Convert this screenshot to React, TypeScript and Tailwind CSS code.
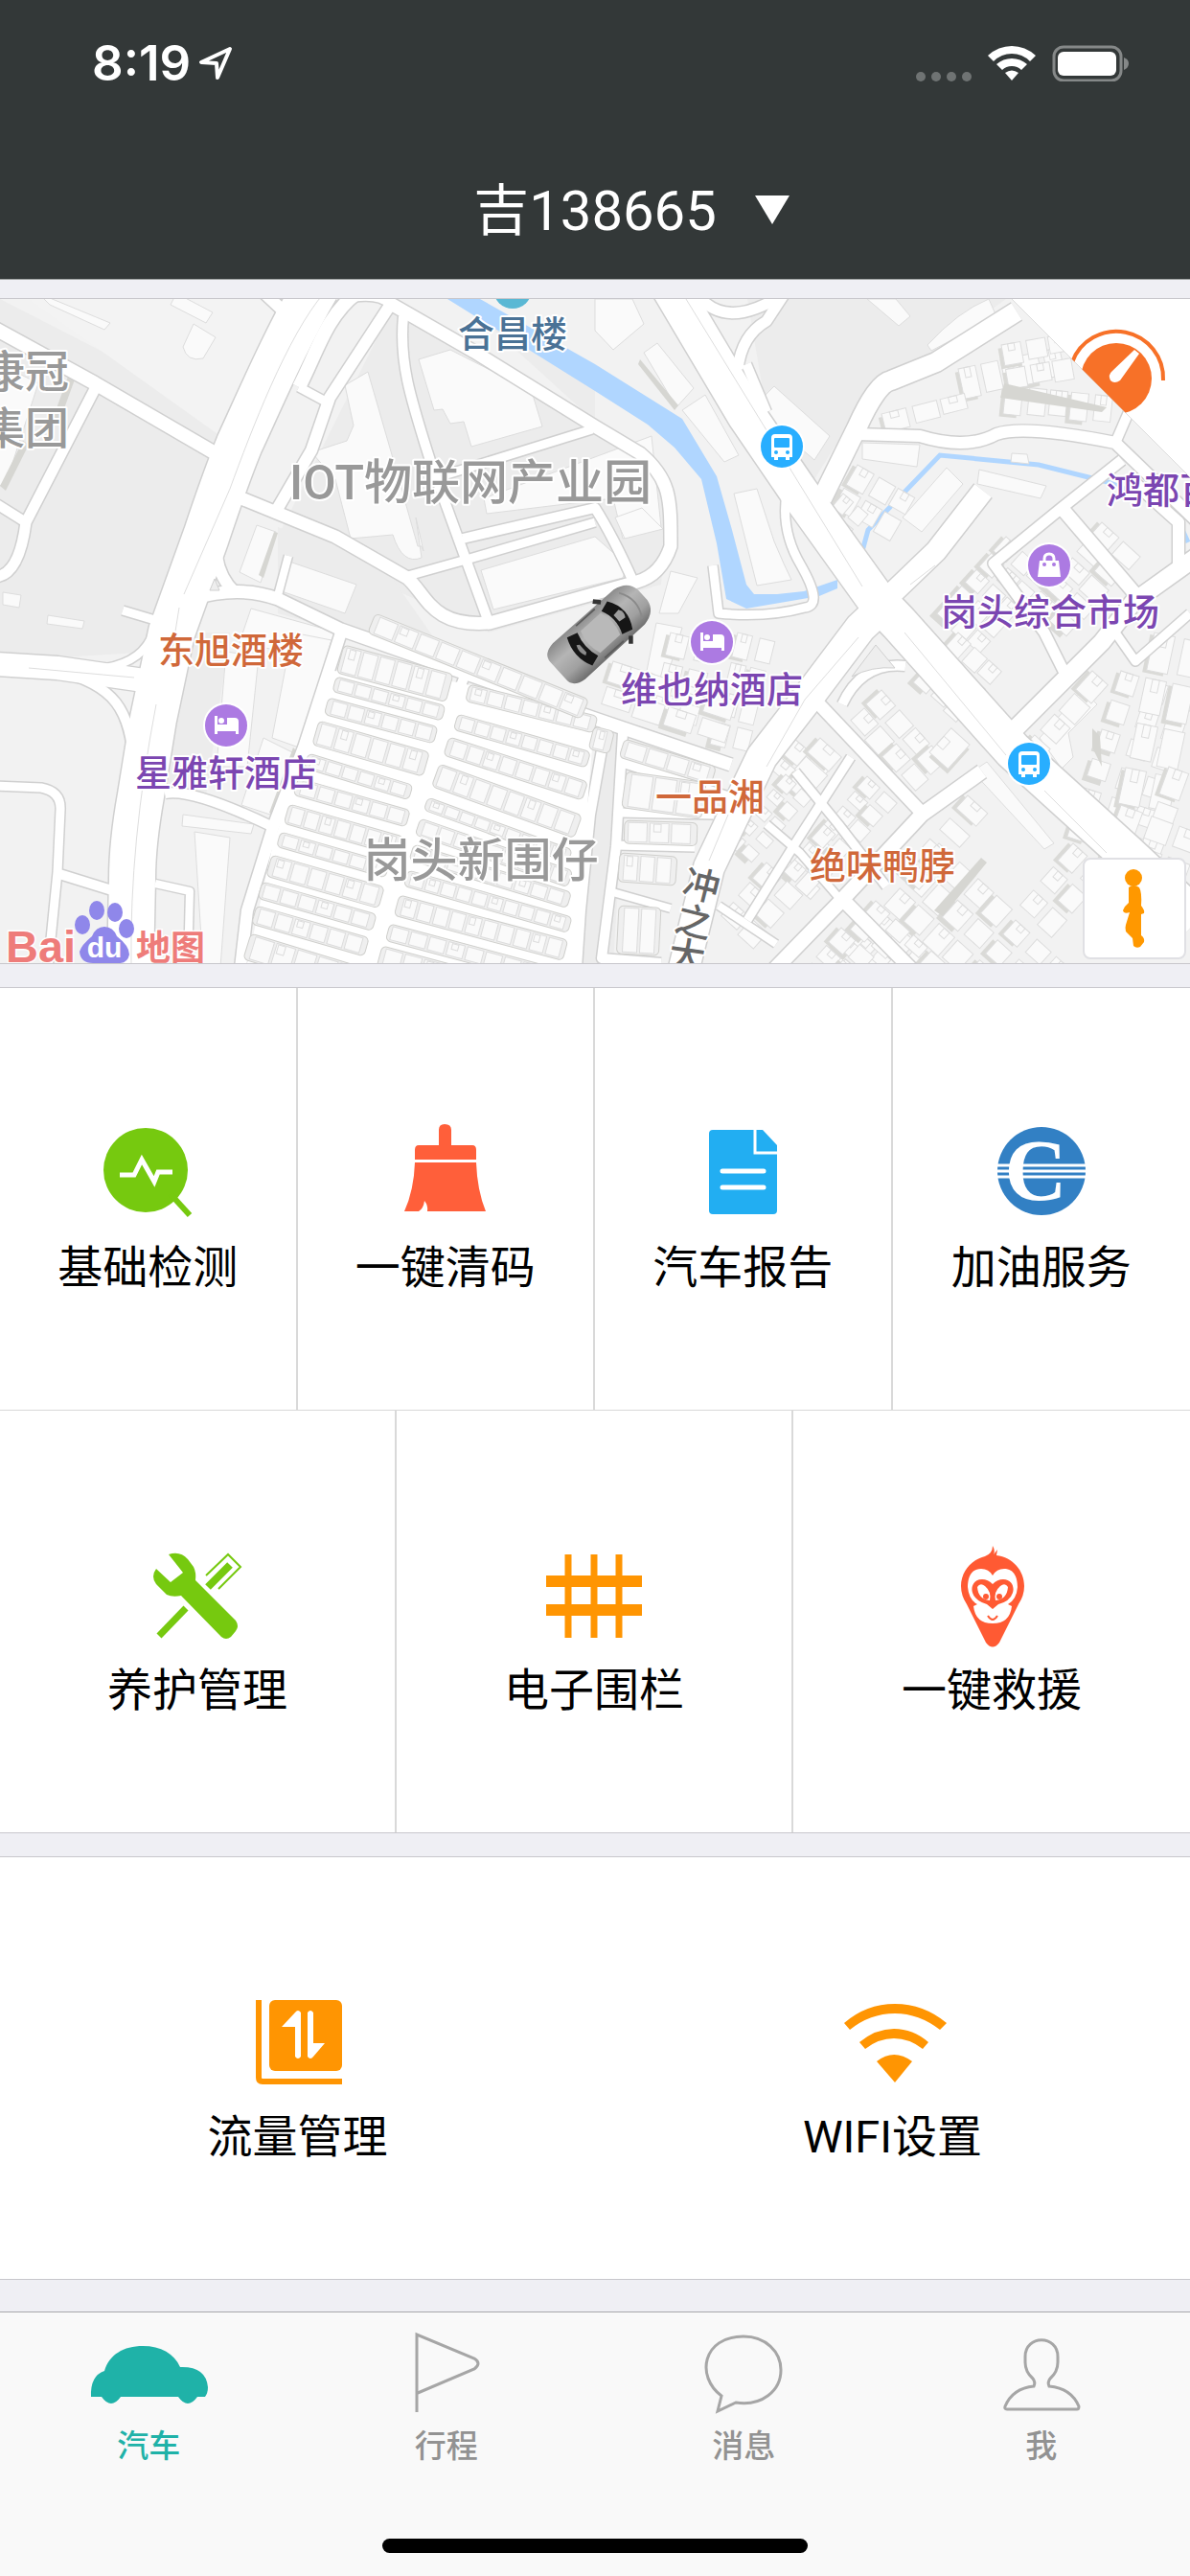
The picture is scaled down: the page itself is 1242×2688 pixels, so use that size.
import React from 'react';

const roads = [
  { d: 'M330 300 C300 350 270 420 250 463 C235 500 225 530 215 560 L179 660 L160 750 L147 830 Q138 880 138 917 L136 1010', w: 48 },
  { d: 'M276 306 L306 334', w: 12 },
  { d: 'M372 306 C340 330 330 370 312 404', w: 14 },
  { d: 'M-5 343 L99 400 L228 475', w: 14 },
  { d: 'M101 402 L27 545 Q20 600 -5 602', w: 11 },
  { d: 'M-5 525 L27 545', w: 10 },
  { d: 'M-5 693 L60 697 L150 710', w: 24 },
  { d: 'M60 700 C120 715 136 740 140 800', w: 10 },
  { d: 'M110 697 Q150 690 160 660', w: 8 },
  { d: 'M-5 820 L43 822 Q64 826 63 845 L60 910 L50 1010', w: 9 },
  { d: 'M62 912 L120 930', w: 10 },
  { d: 'M128 637 L165 648', w: 9 },
  { d: 'M408 317 L344 415 L325 470 L290 530', w: 12 },
  { d: 'M312 404 L338 418', w: 9 },
  { d: 'M370 308 Q400 305 408 317 L495 367 L621 445 L668 473 C700 500 700 520 700 570 Q690 600 665 607 L511 650 C450 655 445 620 425 603 L350 560 L252 520', w: 13 },
  { d: 'M421 330 C416 380 430 420 451 487 L511 652', w: 10 },
  { d: 'M618 448 L460 497', w: 9 },
  { d: 'M483 562 L621 530 Q640 560 661 607', w: 10 },
  { d: 'M422 602 L490 583 L621 545', w: 9 },
  { d: 'M200 625 Q250 610 290 625 L356 657 L621 750 L763 798', w: 13 },
  { d: 'M230 530 Q215 590 245 618', w: 12 },
  { d: 'M289 625 L301 580', w: 8 },
  { d: 'M356 660 L317 780 L285 863 L258 950 L251 1010', w: 12 },
  { d: 'M485 705 L440 823 L408 930 L388 1010', w: 10 },
  { d: 'M632 760 L616 850 L606 950 L602 1010', w: 10 },
  { d: 'M172 828 Q200 822 285 863', w: 10 },
  { d: 'M162 922 L198 930 L196 1010', w: 8 },
  { d: 'M930 625 L898 655 L843 728 L795 790 L771 840 L740 905 L714 1010', w: 32 },
  { d: 'M925 625 L977 575 L1026 512', w: 22 },
  { d: 'M700 300 L779 433 L835 515 L914 625 L938 650 L1057 783 L1175 890 L1250 960', w: 40 },
  { d: 'M823 505 Q812 550 836 590 Q860 632 840 634 Q800 645 750 640 L744 590', w: 9 },
  { d: 'M770 385 Q774 350 800 335 L819 306 Q760 345 730 310', w: 11 },
  { d: 'M779 380 L800 430', w: 10 },
  { d: 'M1061 325 L977 378 L930 397 Q915 400 894 447 L858 520', w: 20 },
  { d: 'M894 453 L960 455 Q1009 470 1040 453 Q1069 443 1164 462 L1250 545', w: 12 },
  { d: 'M1178 430 L1165 460', w: 10 },
  { d: 'M1171 480 L1108 530 L1037 588 L1090 660 L1110 700', w: 11 },
  { d: 'M1108 530 L1185 620', w: 14 },
  { d: 'M1180 500 L1230 545 L1230 590', w: 12 },
  { d: 'M1250 580 L1183 628 L1150 670 L1055 765', w: 18 },
  { d: 'M1025 805 L962 850 L875 943 L805 1015', w: 15 },
  { d: 'M1164 660 L1185 690 L1242 640', w: 9 },
  { d: 'M855 735 L962 848', w: 13 },
  { d: 'M879 735 Q900 690 945 695', w: 10 },
  { d: 'M879 938 L955 1015', w: 14 },
  { d: 'M888 790 L830 880 L780 960', w: 9 },
  { d: 'M800 860 L835 890 L874 935', w: 8 },
  { d: 'M830 805 L875 860 L925 925', w: 9 },
  { d: 'M750 945 L810 985', w: 8 },
  { d: 'M650 765 L643 883 L628 1000 L690 1005', w: 10 },
  { d: 'M648 795 L762 832', w: 10 },
  { d: 'M648 848 L745 850', w: 9 },
  { d: 'M643 882 L725 884', w: 9 },
  { d: 'M636 930 L700 948', w: 8 },
];

// rows of houses: x, y, length, height, angle, count
const terraces = [
  [359, 673, 118, 30, 15, 6], [351, 706, 118, 16, 15, 6], [343, 728, 118, 18, 15, 6], [333, 752, 120, 26, 16, 6],
  [322, 786, 114, 16, 17, 6], [311, 812, 122, 18, 16, 6], [302, 839, 124, 21, 16, 7], [293, 868, 118, 16, 16, 6],
  [284, 892, 122, 23, 16, 6], [274, 920, 124, 18, 16, 6], [268, 945, 122, 20, 16, 6], [262, 974, 124, 28, 17, 5],
  [490, 714, 138, 18, 14, 7], [478, 745, 144, 17, 16, 8], [469, 769, 152, 20, 18, 8], [459, 797, 158, 25, 20, 8],
  [447, 832, 160, 14, 20, 9], [439, 854, 168, 18, 19, 9], [432, 881, 172, 17, 17, 9], [426, 908, 178, 17, 16, 10],
  [417, 934, 182, 22, 15, 10], [407, 964, 190, 18, 15, 9], [399, 987, 196, 24, 15, 9], [392, 640, 240, 22, 22, 10],
  [620, 758, 22, 24, 14, 1], [652, 771, 100, 20, 17, 4], [654, 805, 84, 38, 8, 3], [652, 856, 76, 24, 2, 3],
  [647, 890, 60, 30, 4, 3], [646, 945, 44, 50, 3, 2],
];

// blocks of houses: x, y, angle, columns, rows, width, height, gap
const blocks = [
  [828, 770, 40, 2, 2, 22, 20, 4], [820, 808, 42, 2, 5, 15, 15, 5], [905, 810, 42, 2, 7, 18, 16, 4], [856, 770, 42, 1, 2, 30, 20, 4],
  [800, 900, 42, 2, 3, 22, 22, 5], [860, 860, 42, 2, 3, 16, 20, 4], [980, 880, 42, 4, 6, 22, 26, 5], [914, 940, 42, 6, 3, 20, 18, 6],
  [1010, 830, 42, 1, 4, 28, 18, 12], [878, 968, 42, 2, 3, 20, 20, 4], [920, 720, 48, 4, 2, 22, 22, 4], [970, 785, -48, 1, 1, 34, 26, 4],
  [1170, 700, 18, 3, 6, 20, 22, 10], [1120, 880, 42, 2, 3, 20, 24, 8], [1060, 960, 42, 3, 3, 20, 20, 8], [1205, 660, 12, 2, 4, 22, 40, 8],
  [1050, 560, 42, 3, 5, 18, 20, 3], [1150, 545, 42, 2, 5, 24, 20, 4], [1140, 700, 42, 1, 4, 22, 26, 4], [1000, 660, 42, 3, 3, 18, 22, 3],
  [1050, 402, 6, 5, 1, 18, 30, 5], [1000, 385, -12, 5, 1, 18, 32, 4], [1045, 360, -10, 3, 2, 20, 22, 4], [920, 432, -14, 3, 1, 26, 20, 5],
  [895, 485, 30, 3, 2, 20, 24, 4], [880, 515, 40, 2, 2, 14, 18, 4], [700, 660, 14, 2, 3, 20, 24, 8], [770, 660, 14, 2, 4, 16, 26, 6],
  [640, 690, 18, 4, 2, 30, 22, 5], [1220, 800, 20, 1, 3, 22, 30, 8], [1170, 840, 20, 3, 3, 24, 26, 8],
];

const buildings = [
  'M40 306 L115 337 L109 344 L52 318 Z', 'M184 306 L222 326 L215 337 L178 318 Z', 'M202 338 L225 352 L212 374 Q195 378 191 362 Z',
  'M3 618 L22 621 L20 634 L3 631 Z', 'M50 642 L88 648 L86 656 L49 651 Z', 'M0 380 L40 400 L5 508 L-5 505 Z',
  'M360 402 L384 388 L410 478 L436 570 L440 570 L442 575 L434 540 L440 582 Q420 590 410 558 L366 562 L350 500 L325 472 L362 460 L369 444 Z',
  'M437 375 L470 365 L535 398 L556 412 L566 445 L492 466 L484 440 L470 442 L462 427 L453 428 Z',
  'M505 520 L680 455 L690 550 L650 562 L640 520 L508 536 Z', 'M502 595 L621 560 L655 590 L650 603 L515 636 Z',
  'M268 548 L288 555 L272 608 L250 597 Z', 'M302 586 L372 610 L360 640 L294 617 Z', 'M262 635 L360 662 L340 690 L250 670 Z',
  'M236 680 L270 685 L258 800 L226 800 Z', 'M305 660 L346 668 L312 780 L284 770 Z', 'M275 770 L305 785 L282 850 L252 840 Z',
  'M203 868 L240 874 L230 1010 L212 1010 Z', 'M191 850 L265 860 L262 870 L190 862 Z',
  'M621 312 L660 312 L672 338 L640 365 L621 345 Z', 'M672 368 L686 358 L724 405 L706 425 Z', 'M712 428 L736 412 L771 475 L756 482 Z',
  'M766 515 L790 510 L808 565 L818 588 L826 605 L790 611 Z', 'M642 540 L670 530 L692 552 L652 562 Z', 'M700 596 L728 603 L708 640 L688 640 Z',
  'M786 425 L808 403 L866 455 L850 480 Z', 'M900 462 L960 464 L957 487 L900 479 Z', 'M942 540 L988 488 L1005 505 L962 555 Z',
  'M1022 490 L1092 507 L1086 520 L1020 505 Z', 'M968 360 Q1000 325 1032 312 L1040 330 L972 366 Z', 'M905 312 L935 312 L950 330 L938 340 Z',
  'M1055 482 L1074 484 L1072 474 L1056 473 Z', 'M1030 795 L1100 880 L1090 886 L1015 805 Z', 'M1085 770 L1130 720 L1145 735 L1115 765 L1120 790 L1108 802 Z',
  'M685 650 L712 655 L695 710 L675 700 Z',
];

const shades = [
  'M72 390 L54 440 L62 440 L78 396 Z', 'M0 507 L24 460 L30 464 L6 512 Z', 'M286 555 L290 556 L275 603 L270 600 Z',
  'M668 375 L708 423 L704 428 L666 380 Z', 'M306 780 L310 784 L286 850 L281 848 Z', 'M1118 530 L1170 600 L1166 606 L1114 536 Z',
  'M1140 760 L1148 768 L1150 800 L1140 780 Z', 'M975 950 L1024 895 L1030 900 L984 956 Z', 'M1048 400 L1044 415 L1150 430 L1155 425 Z',
];

const centreLines = 'M338 306 C300 350 262 450 240 510 L192 620 M187 634 L178 690 M163 735 Q135 880 137 1005 M716 312 L900 612 M950 610 L976 590 M896 665 L840 730 L800 800 M760 850 L740 898 M944 660 L1050 788 M1090 825 L1155 890 M30 697 L140 707';

const labels = [
  { text: '康冠', x: 26, y: 404, size: 46, fill: '#999999' },
  { text: '集团', x: 26, y: 463, size: 46, fill: '#999999' },
  { text: 'IOT物联网产业园', x: 491, y: 521, size: 50, fill: '#999999' },
  { text: '岗头新围仔', x: 502, y: 915, size: 49, fill: '#999999' },
  { text: '合昌楼', x: 535, y: 362, size: 38, fill: '#4a7296' },
  { text: '鸿都百', x: 1212, y: 525, size: 38, fill: '#7b46b1' },
  { text: '岗头综合市场', x: 1096, y: 652, size: 38, fill: '#7b46b1' },
  { text: '维也纳酒店', x: 743, y: 733, size: 38, fill: '#7b46b1' },
  { text: '星雅轩酒店', x: 236, y: 820, size: 38, fill: '#7b46b1' },
  { text: '东旭酒楼', x: 241, y: 692, size: 38, fill: '#d0683a' },
  { text: '一品湘', x: 741, y: 845, size: 38, fill: '#d0683a' },
  { text: '绝味鸭脖', x: 921, y: 917, size: 38, fill: '#d0683a' },
];

const BusPin = ({ x, y }: { x: number; y: number }) => (
  <g transform={`translate(${x} ${y})`}>
    <circle r="24" fill="#ffffff" />
    <circle r="22" fill="#28aeff" />
    <path d="M-11 -9 Q-11 -13 -7 -13 H7 Q11 -13 11 -9 V11 H8 V14 H4 V11 H-4 V14 H-8 V11 H-11 Z" fill="#ffffff" />
    <rect x="-8" y="-9" width="16" height="10" rx="1" fill="#28aeff" />
    <circle cx="-6" cy="6" r="2" fill="#28aeff" />
    <circle cx="6" cy="6" r="2" fill="#28aeff" />
  </g>
);

const HotelPin = ({ x, y }: { x: number; y: number }) => (
  <g transform={`translate(${x} ${y})`}>
    <circle r="24" fill="#ffffff" />
    <circle r="22" fill="#ac7ae2" />
    <path d="M-12 -10 H-9 V-1 H1 V-8 H9 Q13 -8 13 -4 V9 H10 V6 H-9 V9 H-12 Z" fill="#ffffff" />
    <circle cx="-5" cy="-5" r="3" fill="#ffffff" />
  </g>
);

const MapView = () => (
  <svg viewBox="0 312 1242 693" preserveAspectRatio="xMidYMid slice" className="block h-full w-full">
    <defs>
      <linearGradient id="carBody" x1="0" y1="0" x2="0" y2="1">
        <stop offset="0" stopColor="#8a8a8a" />
        <stop offset="0.35" stopColor="#b5b5b5" />
        <stop offset="0.7" stopColor="#a0a0a0" />
        <stop offset="1" stopColor="#6e6e6e" />
      </linearGradient>
    </defs>
    <rect y="312" width="1242" height="693" fill="#f2f2f2" />
    <g fill="#ececec">
      <path d="M0 312 L230 430 L228 490 L160 680 L0 690 Z" />
      <path d="M410 320 L621 440 L700 500 L690 610 L510 660 L290 560 Z" />
      <path d="M290 550 L400 590 L470 690 L290 640 Z M780 312 H1050 L900 420 L850 500 L800 430 Z" />
      <path d="M625 760 L655 770 L640 1005 H605 Z M480 312 L621 440 V380 Z M170 660 L240 660 L215 830 L165 820 Z" />
    </g>
    <path d="M30 312 L310 312 L230 455 Z" fill="#f3f3f3" />
    <path d="M467 312 H501 L621 380 L712 437 L748 497 L764 553 L779 610 L787 620 H811 L839 617 L874 605 V614 L855 622 L779 635 L758 625 L748 567 L732 500 L704 467 L676 443 L621 408 Z" fill="#b0d6ff" />
    <path d="M900 575 L906 553 L981 475 L1084 485 L1156 503 L1191 517 L1227 537 L1240 566" fill="none" stroke="#b0d6ff" strokeWidth="5" />
    <g fill="#fafafa" stroke="#dddddd" strokeWidth="1">
      {buildings.map((d, index) => (
        <path key={index} d={d} />
      ))}
      {blocks.map(([x, y, angle, cols, rows, w, h, gap], index) => (
        <g key={index} transform={`translate(${x} ${y}) rotate(${angle})`}>
          {Array.from({ length: cols * rows }, (_, i) => {
            const left = (i % cols) * (w + gap) + ((i * 5) % 3);
            const top = Math.floor(i / cols) * (h + gap);
            return (
              <g key={i}>
                {i % 3 === 0 && <rect x={left - 4} y={top + 3} width={w} height={h} fill="#dadad7" stroke="none" />}
                <rect x={left} y={top} width={w} height={h - ((i * 7) % 5)} />
                {i % 2 === 0 && <rect x={left + w / 3} y={top} width={w / 3} height={h / 3} fill="none" />}
              </g>
            );
          })}
        </g>
      ))}
    </g>
    <g fill="#d6d6d2">
      {shades.map((d, index) => (
        <path key={index} d={d} />
      ))}
    </g>
    <g fill="none" stroke="#d0d0d0" strokeLinejoin="round">
      {roads.map((road, index) => (
        <path key={index} d={road.d} strokeWidth={road.w + 3} />
      ))}
    </g>
    <g fill="none" stroke="#ffffff" strokeLinejoin="round">
      {roads.map((road, index) => (
        <path key={index} d={road.d} strokeWidth={road.w} />
      ))}
    </g>
    <path d={centreLines} fill="none" stroke="#dedede" strokeWidth="1" />
    <path d="M348 700 L480 712 L620 755 L600 1005 H258 L285 880 Z" fill="#ffffff" />
    <path d="M914 673 L889 706 Q910 695 934 697 Z M224 604 L219 616 L229 616 Z" fill="#eeeeee" stroke="#d0d0d0" />
    {terraces.map(([x, y, length, height, angle, count], index) => (
      <g key={index} transform={`translate(${x} ${y}) rotate(${angle})`}>
        <rect width={length} height={height} rx="5" fill="#efefef" stroke="#cfcfcc" strokeWidth="1" />
        {Array.from({ length: count }, (_, i) => {
          const pitch = (length - 8) / count;
          return (
            <g key={i} fill="#fafafa" stroke="#dcdcdc">
              <rect x={4 + i * pitch + ((i * 3 + index) % 3)} y="2" width={pitch - 3} height={height - 4} />
              {(i + index) % 4 === 0 && <rect x={8 + i * pitch} y="3" width={pitch / 3} height={height / 3} />}
            </g>
          );
        })}
      </g>
    ))}

    <circle cx="535" cy="302" r="20" fill="#5ab8d4" />
    <BusPin x={816} y={466} />
    <BusPin x={1074} y={797} />
    <HotelPin x={743} y={670} />
    <HotelPin x={236} y={757} />
    <g transform="translate(1095 590)">
      <circle r="24" fill="#ffffff" />
      <circle r="22" fill="#ac7ae2" />
      <path d="M-10 -5 H10 L12 12 H-12 Z" fill="#ffffff" />
      <path d="M-5 -5 V-7 Q-5 -12 0 -12 Q5 -12 5 -7 V-5" fill="none" stroke="#ffffff" strokeWidth="3" />
      <circle cx="-5" cy="-1" r="2" fill="#ac7ae2" />
      <circle cx="5" cy="-1" r="2" fill="#ac7ae2" />
    </g>

    <g textAnchor="middle" stroke="#ffffff" strokeWidth="4" strokeLinejoin="round" paintOrder="stroke" className="font-medium">
      {labels.map((label) => (
        <text key={label.text} x={label.x} y={label.y} fontSize={label.size} fill={label.fill}>
          {label.text}
        </text>
      ))}
      <g fontSize="38" fill="#666666">
        <text transform="translate(729 937) rotate(14)">冲</text>
        <text transform="translate(721 975) rotate(14)">之</text>
        <text transform="translate(715 1011) rotate(8)">大</text>
      </g>
    </g>

    {/* car marker */}
    <g transform="translate(626 661) rotate(-42) scale(0.94 0.9)">
      <path d="M-62 -14 Q-62 -26 -46 -28 L44 -27 Q62 -24 64 -8 V8 Q62 24 44 27 L-46 28 Q-62 26 -62 14 Z" fill="url(#carBody)" />
      <path d="M18 -33 L24 -26 M18 33 L24 26" stroke="#333333" strokeWidth="5" />
      <path d="M30 -22 Q44 0 30 22 L18 18 Q26 0 18 -18 Z" fill="#161616" />
      <path d="M33 -6 Q37 0 33 6 L25 5 V-5 Z" fill="#9c9c9c" />
      <path d="M-30 -22 Q-40 0 -30 22 L-18 18 Q-24 0 -18 -18 Z" fill="#161616" />
      <path d="M-28 -8 Q-32 0 -28 8 L-25 6 V-6 Z" fill="#8c8c8c" />
      <path d="M-14 -25 H14 M-14 25 H14" stroke="#5c5c5c" strokeWidth="2" />
      <path d="M-14 -17 Q-20 0 -14 17 L16 17 Q22 0 16 -17 Z" fill="#b9b9b9" />
      <path d="M46 -20 Q58 0 46 20" fill="none" stroke="#8a8a8a" strokeWidth="2" />
    </g>

    {/* map provider logo */}
    <g stroke="#ffffff" strokeWidth="3" paintOrder="stroke" className="font-bold">
      <text x="6" y="1004" fontSize="47" fill="#ee7c7a" fontFamily="Liberation Sans, Arial, sans-serif">Bai</text>
      <text x="142" y="1002" fontSize="36" fill="#ee7c7a">地图</text>
    </g>
    <g fill="#8f87ea">
      <ellipse cx="86" cy="965" rx="8" ry="10" />
      <ellipse cx="101" cy="950" rx="8" ry="10" />
      <ellipse cx="120" cy="952" rx="8" ry="10" />
      <ellipse cx="132" cy="969" rx="8" ry="10" />
      <path d="M109 967 Q118 967 122 977 Q135 987 135 996 Q133 1006 122 1005 H97 Q84 1005 83 993 Q85 986 96 977 Q100 967 109 967 Z" />
    </g>
    <text x="109" y="999" fontSize="30" textAnchor="middle" fill="#ffffff" fontFamily="Liberation Sans, Arial, sans-serif" className="font-bold">du</text>
  </svg>
);

const DetectIcon = () => (
  <svg viewBox="0 0 120 120" className="size-[120px]">
    <circle cx="58" cy="59" r="44" fill="#76c90f" />
    <path d="M84 84 L104 106" stroke="#76c90f" strokeWidth="6" />
    <path d="M31 64 H46 L54 48 L67 71 L71 61 H86" fill="none" stroke="#ffffff" strokeWidth="5" />
  </svg>
);

const BroomIcon = () => (
  <svg viewBox="0 0 120 120" className="size-[120px]" fill="#ff5f3a">
    <path d="M53 17 Q53 11 59 11 Q66 11 66 17 V33 H88 Q92 33 92 38 V48 H28 V38 Q28 33 32 33 H53 Z" />
    <path d="M28 51 H92 Q93 80 102 102 H41 Q42 96 38 91 Q37 99 32 102 H17 Q27 80 28 51 Z" />
  </svg>
);

const ReportIcon = () => (
  <svg viewBox="0 0 120 120" className="size-[120px]">
    <path d="M29 17 H81 L96 33 V101 Q96 105 92 105 H29 Q25 105 25 101 V21 Q25 17 29 17 Z" fill="#22aef2" />
    <path d="M73 17 V41 H96" fill="none" stroke="#ffffff" strokeWidth="3" />
    <path d="M39 60 H82 M39 77 H82" stroke="#ffffff" strokeWidth="5" strokeLinecap="round" />
  </svg>
);

const FuelIcon = () => (
  <svg viewBox="0 0 120 120" className="size-[120px]">
    <circle cx="60" cy="60" r="46" fill="#3280c4" />
    <path d="M14 54 H106 M14 60 H106 M14 66 H106" stroke="#ffffff" strokeWidth="3" />
    <text x="54" y="90" fontSize="90" textAnchor="middle" fill="#ffffff" fontFamily="Liberation Serif, serif" className="font-bold">C</text>
  </svg>
);

const ToolsIcon = () => (
  <svg viewBox="0 0 120 120" className="size-[120px]">
    <path d="M30 19 Q42 15 50 24 L56 32 Q59 38 58 46 L100 88 Q104 94 100 99 L95 105 Q90 109 85 105 L43 62 Q34 64 28 61 L17 50 Q11 42 17 34 L32 48 L45 38 Z" fill="#76c90f" />
    <path d="M20 104 L48 75" stroke="#76c90f" strokeWidth="7" />
    <path d="M71 53 L94 30" stroke="#76c90f" strokeWidth="8" />
    <path d="M69 41 L92 19 L105 32 L82 55" fill="none" stroke="#76c90f" strokeWidth="2" />
  </svg>
);

const FenceIcon = () => (
  <svg viewBox="0 0 120 120" className="size-[120px]" stroke="#ff9502">
    <path d="M33 19 V106 M60 19 V106 M86 19 V106" strokeWidth="7" />
    <path d="M10 47 H110 M10 77 H110" strokeWidth="12" />
  </svg>
);

const RescueIcon = () => (
  <svg viewBox="0 0 120 120" className="size-[120px]">
    <path d="M53 21 Q61 18 61 10 Q64 15 62 19 L66 14 L65 20 C82 22 94 36 94 52 Q94 62 88 71 L68 111 Q61 120 54 111 L34 71 Q28 62 28 52 C28 36 40 24 53 21 Z" fill="#ff5a33" />
    <path d="M61 41 Q57 34 49 34 C38 34 35 44 35 53 Q36 66 45 71 L41 73 Q43 91 61 91 Q79 91 81 73 L77 71 Q86 66 87 53 C87 44 84 34 73 34 Q65 34 61 41 Z" fill="#ffffff" />
    <path d="M61 50 Q56 45 50 45 C41 45 38 53 40 59 Q43 68 55 71 L61 76 L67 71 Q79 68 82 59 C84 53 81 45 72 45 Q66 45 61 50 Z" fill="#ff5a33" />
    <path d="M45 53 Q48 48 53 52 Q60 58 58 67 Q46 66 45 53 Z M77 53 Q74 48 69 52 Q62 58 64 67 Q76 66 77 53 Z" fill="#ffffff" />
    <circle cx="54" cy="63" r="3" fill="#ff5a33" />
    <circle cx="68" cy="63" r="3" fill="#ff5a33" />
    <path d="M56 83 Q61 91 66 83" fill="none" stroke="#ff5a33" strokeWidth="2" />
  </svg>
);

const TrafficIcon = () => (
  <svg viewBox="0 0 120 120" className="size-[120px]">
    <rect x="30" y="18" width="76" height="74" rx="6" fill="#ff9502" />
    <path d="M19 18 V99 Q19 103 23 103 H106" fill="none" stroke="#ff9502" strokeWidth="6" />
    <path d="M57 31 Q60 27 63 31 V77 Q60 81 57 77 V46 H43 Z" fill="#ffffff" />
    <path d="M70 31 Q73 27 76 31 V63 H88 L76 77 Q73 81 70 77 Z" fill="#ffffff" />
  </svg>
);

const WifiIcon = () => (
  <svg viewBox="0 0 120 120" className="size-[120px]" fill="#ff9502">
    <path d="M9 42 Q32 22 62 22 Q92 22 116 42 L109 49 Q87 32 62 32 Q36 32 15 49 Z" />
    <path d="M25 62 Q42 48 61 48 Q81 48 97 62 L91 69 Q77 58 61 58 Q45 58 31 69 Z" />
    <path d="M43 82 Q61 68 80 82 L62 104 Z" />
  </svg>
);

const CarTabIcon = () => (
  <svg viewBox="0 0 126 96" className="h-24 w-[126px]" fill="#1fb2a8">
    <path d="M3 72 Q2 50 17 45 C22 28 37 19 57 19 C76 19 90 27 96 41 Q123 40 125 62 Q125 68 122 72 H114 Q104 86 94 72 H34 Q24 86 14 72 Z" />
  </svg>
);

const TripTabIcon = () => (
  <svg viewBox="0 0 126 96" className="h-24 w-[126px]" fill="none" stroke="#a6a6a6" strokeWidth="3">
    <path d="M32 88 V7 L92 32 Q100 37 92 43 L33 68" />
  </svg>
);

const MessageTabIcon = () => (
  <svg viewBox="0 0 126 96" className="h-24 w-[126px]" fill="none" stroke="#a6a6a6" strokeWidth="3">
    <path d="M40 71 C13 51 20 9 63 9 C86 9 102 25 102 44 C102 66 82 82 55 78 L36 87 Z" />
  </svg>
);

const MeTabIcon = () => (
  <svg viewBox="0 0 126 96" className="h-24 w-[126px]" fill="none" stroke="#a6a6a6" strokeWidth="3">
    <path d="M55 61 Q57 57 54 53 Q46 46 46 36 V30 C46 7 80 7 80 30 V36 Q80 46 72 53 Q69 57 71 61 Q94 63 102 82 Q102 85 100 85 H27 Q24 85 25 82 Q33 63 55 61 Z" />
  </svg>
);

const services = [
  { name: '基础检测', icon: <DetectIcon /> },
  { name: '一键清码', icon: <BroomIcon /> },
  { name: '汽车报告', icon: <ReportIcon /> },
  { name: '加油服务', icon: <FuelIcon /> },
];

const tools = [
  { name: '养护管理', icon: <ToolsIcon /> },
  { name: '电子围栏', icon: <FenceIcon /> },
  { name: '一键救援', icon: <RescueIcon /> },
];

const network = [
  { name: '流量管理', icon: <TrafficIcon /> },
  { name: 'WIFI设置', icon: <WifiIcon /> },
];

const tabs = [
  { name: '汽车', icon: <CarTabIcon />, active: true },
  { name: '行程', icon: <TripTabIcon />, active: false },
  { name: '消息', icon: <MessageTabIcon />, active: false },
  { name: '我', icon: <MeTabIcon />, active: false },
];

const Cell = ({ name, icon }: { name: string; icon: React.ReactNode }) => (
  <button className="flex flex-col items-center gap-[11px] pt-[131px] pb-[118px]">
    {icon}
    <span className="text-[47px] leading-[60px] text-black">{name}</span>
  </button>
);

const App = () => {
  return (
    <div className="flex min-h-screen flex-col bg-[#efeff4] font-['Roboto','Noto_Sans_CJK_SC',sans-serif]">
      <header className="border-b border-[#a0a3a3] bg-[#333838] text-white">
        <div className="flex h-[132px] items-center justify-between pr-16 pl-24">
          <div className="flex items-center gap-2">
            <span className="font-['Inter',sans-serif] text-[51px] leading-[60px] font-semibold">8:19</span>
            <svg viewBox="0 0 36 36" className="size-9" fill="none" stroke="#ffffff" strokeWidth="4" strokeLinejoin="round">
              <path d="M33 3 L3 17 L19 18 L20 33 Z" />
            </svg>
          </div>
          <div className="flex items-center gap-4">
            <div className="flex gap-[6px] pt-7">
              <span className="size-[10px] rounded-full bg-[#6f7373]" />
              <span className="size-[10px] rounded-full bg-[#6f7373]" />
              <span className="size-[10px] rounded-full bg-[#6f7373]" />
              <span className="size-[10px] rounded-full bg-[#6f7373]" />
            </div>
            <svg viewBox="0 0 52 38" className="h-[38px] w-[52px]" fill="#ffffff">
              <path d="M1 11 Q12 1 26 1 Q40 1 51 11 L45 17 Q37 9 26 9 Q15 9 7 17 Z" />
              <path d="M10 20 Q17 14 26 14 Q35 14 42 20 L36 26 Q32 22 26 22 Q20 22 16 26 Z" />
              <path d="M19 29 Q26 24 33 29 L26 37 Z" />
            </svg>
            <svg viewBox="0 0 80 38" className="h-[38px] w-20">
              <rect x="2" y="2" width="70" height="35" rx="10" fill="none" stroke="#858888" strokeWidth="3" />
              <rect x="6" y="7" width="61" height="25" rx="6" fill="#ffffff" />
              <path d="M75 13 Q80 15 80 19 Q80 24 75 26 Z" fill="#858888" />
            </svg>
          </div>
        </div>
        <button aria-haspopup="listbox" className="flex h-[159px] w-full justify-center pt-[52px]">
          <span className="flex-1" />
          <span className="text-[58px] leading-[72px]">吉138665</span>
          <span className="flex flex-1 pt-5">
            <svg viewBox="0 0 36 30" className="ml-10 h-[30px] w-9" fill="#ffffff">
              <path d="M0 0 H36 L18 30 Z" />
            </svg>
          </span>
        </button>
      </header>

      <main>
        <section className="relative mt-[19px] aspect-[1242/695] overflow-hidden border-y border-[#c8c7cc]">
          <MapView />
          <button aria-label="驾驶数据" className="absolute top-0 right-0">
            <svg viewBox="0 0 186 186" className="size-[186px]">
              <clipPath id="corner">
                <path d="M0 0 H186 V186 Z" />
              </clipPath>
              <path d="M0 0 H186 V186 Z" fill="#ffffff" />
              <path d="M0 0 L186 186" stroke="#dddddd" />
              <g clipPath="url(#corner)">
                <circle cx="109" cy="83" r="37" fill="#f77128" />
                <path d="M63 66 A49 49 0 0 1 158 85" fill="none" stroke="#f77128" strokeWidth="4" />
                <path d="M128 53 L133 57 L113 85 Q107 89 103 85 Q100 79 105 75 Z" fill="#ffffff" />
              </g>
            </svg>
          </button>
          <button aria-label="全景" className="absolute right-1 bottom-1 rounded-lg border-2 border-[#e0e0e4] bg-white">
            <svg viewBox="0 0 104 102" className="h-[102px] w-[104px]" fill="#ff9800">
              <circle cx="51" cy="19" r="9" />
              <path d="M46 29 Q51 25 57 29 Q60 34 59 48 Q63 53 62 56 L59 57 L59 79 Q63 82 62 86 L58 91 Q54 93 51 90 L50 82 L43 75 Q42 71 43 68 L47 55 Q41 57 40 53 Q42 48 46 45 Z" />
            </svg>
          </button>
        </section>

        <section className="mt-6 border-y border-[#c8c7cc] bg-white">
          <div className="grid grid-cols-4 divide-x-2 divide-[#d9d9d9]">
            {services.map((item) => (
              <Cell key={item.name} name={item.name} icon={item.icon} />
            ))}
          </div>
          <div className="grid grid-cols-3 divide-x-2 divide-[#d9d9d9] border-t border-[#d9d9d9]">
            {tools.map((item) => (
              <Cell key={item.name} name={item.name} icon={item.icon} />
            ))}
          </div>
        </section>

        <section className="mt-6 grid grid-cols-2 border-y border-[#c8c7cc] bg-white">
          {network.map((item) => (
            <Cell key={item.name} name={item.name} icon={item.icon} />
          ))}
        </section>
      </main>

      <footer className="mt-auto border-t border-[#a7a7ab] bg-[#f9f9f9]">
        <nav className="grid grid-cols-4">
          {tabs.map((tab) => (
            <a key={tab.name} href="#" className="flex flex-col items-center gap-2 pt-4">
              {tab.icon}
              <span className={`text-[33px] leading-[40px] font-medium ${tab.active ? 'text-[#1fb2a8]' : 'text-[#929292]'}`}>
                {tab.name}
              </span>
            </a>
          ))}
        </nav>
        <div className="mx-auto mt-[76px] mb-6 h-[15px] w-[444px] rounded-full bg-black" />
      </footer>
    </div>
  );
};

export default App;
